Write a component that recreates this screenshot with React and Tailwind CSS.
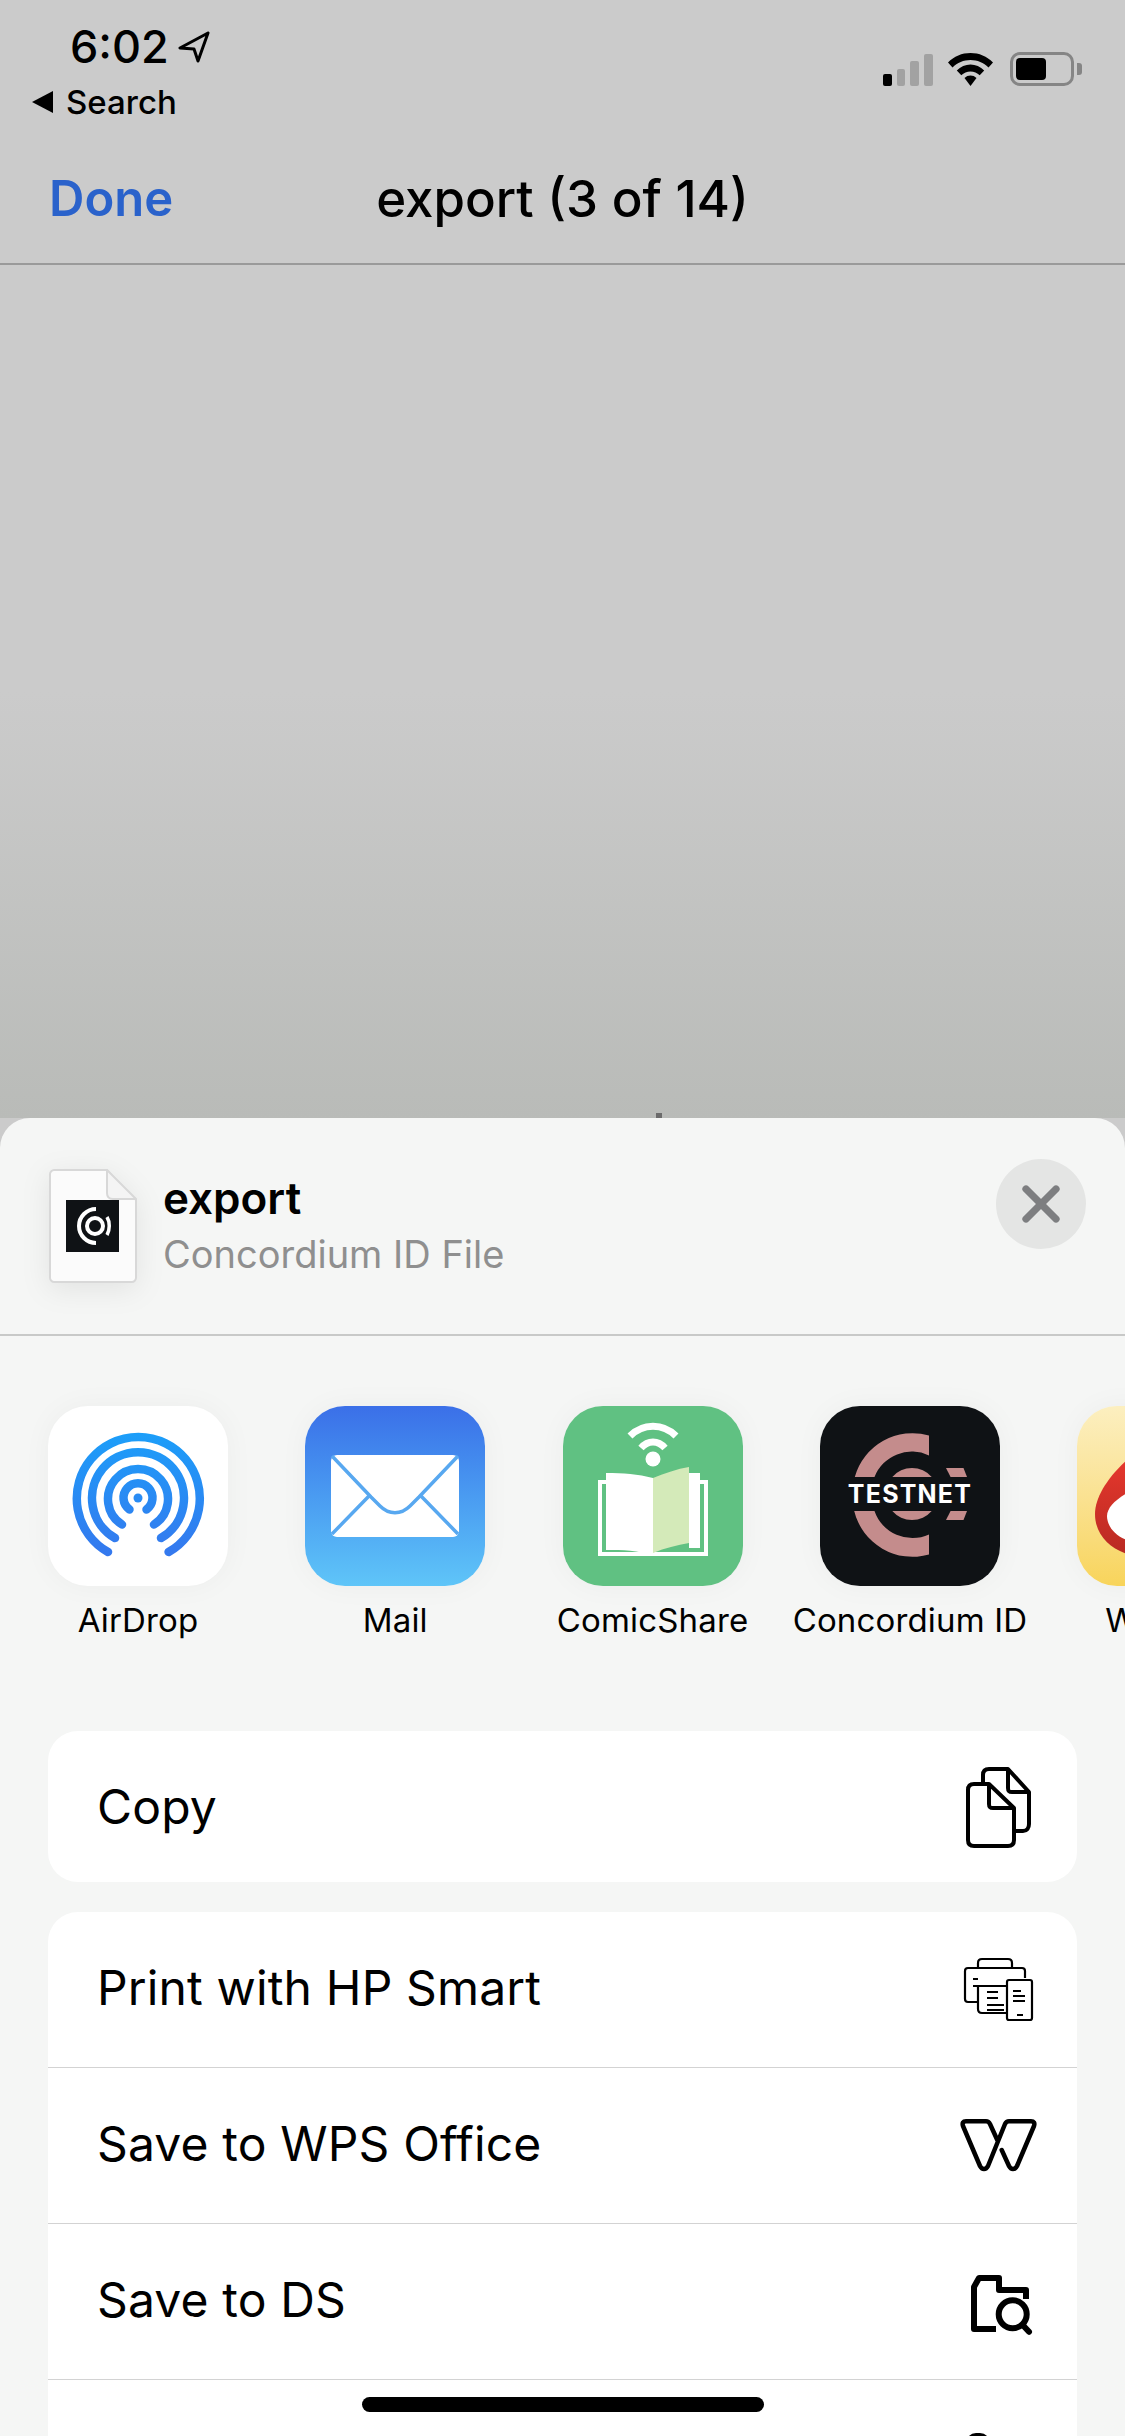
import { X } from "lucide-react"

function StatusIcons() {
  return (
    <div className="flex items-end gap-[15px] h-[34px]">
      {/* signal */}
      <div className="flex items-end gap-[5px]">
        <div className="w-[9px] h-[12px] bg-black rounded-[2px]" />
        <div className="w-[8px] h-[17px] bg-[#a2a2a2] rounded-[2px]" />
        <div className="w-[9px] h-[25px] bg-[#a2a2a2] rounded-[2px]" />
        <div className="w-[9px] h-[32px] bg-[#a2a2a2] rounded-[2px]" />
      </div>
      <svg width="45" height="33" viewBox="0 0 45 33">
        <path d="M22.5 0C14 0 6 3.300 0 9.500L4.500 14.500C9.300 9.700 15.700 7 22.500 7S35.700 9.700 40.500 14.500L45 9.500C39 3.300 31 0 22.500 0Z" />
        <path d="M22.500 11.500C17.500 11.500 12.500 13.500 8.800 17.500L13.300 22.300C15.800 19.800 19 18.500 22.500 18.500S29.200 19.800 31.700 22.300L36.200 17.500C32.500 13.500 27.500 11.500 22.500 11.500Z" />
        <path d="M22.500 22.500C20.300 22.500 18.200 23.300 16.500 25L22.500 33L28.500 25C26.800 23.300 24.700 22.500 22.500 22.500Z" />
      </svg>
      <div className="ml-[2px] flex items-center gap-[3px]">
        <div className="w-[64px] h-[34px] rounded-[10px] border-[3px] border-[#858585] pl-[3px] py-[3px]">
          <div className="w-[30px] h-[22px] bg-black rounded-[4px]" />
        </div>
        <div className="w-[5px] h-[12px] bg-[#858585] rounded-r-[3px]" />
      </div>
    </div>
  )
}

function AirDropIcon() {
  return (
    <svg width="180" height="180" viewBox="0 0 180 180" fill="none">
      <defs>
        <linearGradient id="airdropGrad" gradientUnits="userSpaceOnUse" x1="0" y1="28" x2="0" y2="150">
          <stop offset="0" stopColor="#1c9ef9" />
          <stop offset="1" stopColor="#3578ee" />
        </linearGradient>
      </defs>
      <g stroke="url(#airdropGrad)" strokeWidth="8.500" strokeLinecap="round">
        <path d="M60 146A61.500 61.500 0 1 1 120.600 146" />
        <path d="M67 132A46 46 0 1 1 113 132" />
        <path d="M74 118.500A30 30 0 1 1 106 118.500" />
        <path d="M81.500 103.500A14.500 14.500 0 1 1 98.500 103.500" />
      </g>
      <circle cx="90" cy="92" r="4.500" fill="#2a8cf4" />
    </svg>
  )
}

function MailIcon() {
  return (
    <svg width="180" height="180" viewBox="0 0 180 180" fill="none">
      <rect x="26" y="49" width="128" height="82" rx="6" fill="#fff" />
      <g stroke="#58a8f0" strokeWidth="3.500">
        <path d="M27 50L66 91L75 100C84 109 96 109 105 100L114 91L153 50" />
        <path d="M64 90L27 128M116 90L153 128" />
      </g>
    </svg>
  )
}

function ComicShareIcon() {
  return (
    <svg width="180" height="180" viewBox="0 0 180 180" fill="none">
      <g stroke="#fff" strokeWidth="7">
        <path d="M67 30C80 17 100 17 113 30" />
        <path d="M78 42C85 34 95 34 102 42" />
      </g>
      <circle cx="90" cy="53" r="7.500" fill="#fff" />
      <rect x="37" y="76" width="106" height="72" stroke="#fff" strokeWidth="4" />
      <rect x="126" y="67" width="11" height="75" fill="#fff" />
      <path d="M43 67C60 67 75 68 90 72V150C75 144 60 144 43 144Z" fill="#fff" />
      <path d="M90 72C102 67 114 63 126 61V137C114 139 102 142 90 147Z" fill="#d4eab9" />
    </svg>
  )
}

function ConcordiumIcon() {
  return (
    <svg width="180" height="180" viewBox="0 0 180 180">
      <g fill="#c48c8c">
        <path d="M109 29.500A60 60 0 0 0 34.800 71H54.500A40 40 0 0 1 109 49.500Z" />
        <path d="M109 148.500A60 60 0 0 1 34.200 105H54.500A40 40 0 0 0 109 128.500Z" />
        <path d="M72.300 71A26 26 0 0 1 111.700 71Z" />
        <path d="M72.300 105A26 26 0 0 0 111.700 105Z" />
        <path d="M126 62H143.500L147 71H130.600Z" />
        <path d="M130.600 105H147L143.500 114H126Z" />
      </g>
      <text x="90" y="97" textAnchor="middle" fill="#fff" fontFamily="Inter, sans-serif" fontWeight="700" fontSize="25" letterSpacing="1.200">TESTNET</text>
    </svg>
  )
}

function PartialIcon() {
  return (
    <svg width="180" height="180" viewBox="0 0 180 180">
      <defs>
        <linearGradient id="redGrad" x1="0" y1="0" x2="0" y2="1">
          <stop offset="0" stopColor="#e5372d" />
          <stop offset="1" stopColor="#b92a22" />
        </linearGradient>
      </defs>
      <path d="M50 54C30 72 18 92 18 108C18 128 32 142 50 148H100V54Z" fill="url(#redGrad)" />
      <path d="M50 87C38 94 30 102 30 110C30 120 38 130 50 134H100V87Z" fill="#fff" />
    </svg>
  )
}

function AppItem({ label, iconClass, children }) {
  return (
    <div className="w-[180px] shrink-0 flex flex-col items-center">
      <div className={`w-[180px] h-[180px] rounded-[40px] overflow-hidden shadow-[0_0_30px_rgba(0,0,0,0.04)] ${iconClass}`}>
        {children}
      </div>
      <span className="mt-[14px] text-[33px] leading-[40px] text-black whitespace-nowrap tracking-[0.15px]">{label}</span>
    </div>
  )
}

function CopyIcon() {
  return (
    <svg width="75" height="90" viewBox="0 0 75 90" fill="none" stroke="#000" strokeWidth="4" strokeLinejoin="round">
      <path d="M22 21V13C22 9 24 7 28 7H47L68 30V62C68 66 66 69 62 69H55" />
      <path d="M47 7V26C47 29 48 30 51 30H68" />
      <path d="M28 22H13C9 22 7 24 7 28V78C7 82 9 84 13 84H47C51 84 53 82 53 78V46L28 22Z" fill="#fff" />
      <path d="M28 22V42C28 45 29 46 32 46H53" />
    </svg>
  )
}

function PrintIcon() {
  return (
    <svg width="76" height="70" viewBox="0 0 76 70" fill="none" stroke="#000" strokeWidth="2.200" strokeLinejoin="round">
      <path d="M18 13V8C18 5 20 4 22 4H48C50 4 52 5 52 8V13" />
      <path d="M65 23V16C65 14 64 13 62 13H8C6 13 5 14 5 16V44C5 46 6 47 8 47H18" />
      <path d="M13 24H18M13 31H47" />
      <path d="M18 31V54C18 57 19 58 22 58H46" />
      <path d="M27 37H38M27 43H38M27 50H44M27 55H44" />
      <rect x="47" y="25" width="25" height="40" rx="2" fill="#fff" />
      <path d="M53 36H61M53 41H65M53 46H65M57 60H63" />
    </svg>
  )
}

function WpsIcon() {
  return (
    <svg width="87" height="63" viewBox="0 0 87 63" fill="none" stroke="#000" strokeWidth="4.500" strokeLinejoin="round" strokeLinecap="round">
      <path d="M42.300 26L35 10C34 8 33 7.300 31 7.300H11C8 7.300 7 9 8 12L25 52C27 56 31 56 33 52L50 10C51 8 52 7.300 54 7.300H76C79 7.300 80 9 79 12L62 52C60 56 56 56 54 52L46.700 36" />
    </svg>
  )
}

function FolderSearchIcon() {
  return (
    <svg width="75" height="72" viewBox="0 0 75 72" fill="none" stroke="#000" strokeWidth="6">
      <path d="M35 63H13V21L18 12H38V24H65V33" strokeLinejoin="round" />
      <circle cx="51.700" cy="48.300" r="14" />
      <path d="M61.700 59L68 65.700" strokeLinecap="round" />
    </svg>
  )
}

function ActionRow({ label, icon, divider }) {
  return (
    <div className={`h-[156px] flex items-center justify-between pl-[49px] pr-[33px] ${divider ? "border-b border-[#d3d3d3]" : ""}`}>
      <span className="text-[48px] text-black tracking-[0.15px] -mt-[3px]">{label}</span>
      <div className="w-[92px] flex justify-center">{icon}</div>
    </div>
  )
}

export default function App() {
  return (
    <div className="relative h-[2436px] w-[1125px] overflow-hidden flex flex-col bg-[#cbcbcb] font-[family-name:Inter,sans-serif]">
      {/* Status bar */}
      <div className="h-[132px] flex justify-between shrink-0">
        <div className="pl-[32px]">
          <div className="flex items-center pl-[38px] pt-[20px] h-[74px]">
            <span className="text-[45px] font-medium leading-[50px] text-black">6:02</span>
            <svg className="ml-[9px]" width="32" height="32" viewBox="0 0 32 32" fill="none" stroke="#000" strokeWidth="3" strokeLinejoin="round">
              <path d="M30 2L2 17L16 18L20 30Z" />
            </svg>
          </div>
          <div className="flex items-center mt-[8px]">
            <svg width="24" height="22" viewBox="0 0 24 22"><path d="M0 11L21 0V22Z" /></svg>
            <span className="ml-[10px] text-[33px] font-medium leading-[40px] text-black">Search</span>
          </div>
        </div>
        <div className="pt-[52px] pr-[43px]">
          <StatusIcons />
        </div>
      </div>

      {/* Nav bar */}
      <div className="relative h-[133px] shrink-0 flex items-center justify-center pt-[3px] border-b-2 border-[#9a9a9a]">
        <span className="absolute left-[49px] text-[49px] font-semibold text-[#2a62cb]">Done</span>
        <span className="text-[51px] font-medium text-black">export (3 of 14)</span>
      </div>

      {/* Blank preview */}
      <div className="flex-1 flex items-end pl-[656px] bg-gradient-to-b from-[#cbcbcb] from-50% to-[#b9bbb8]">
        <div className="w-[6px] h-[5px] bg-[#6b6b6b]" />
      </div>

      {/* Share sheet */}
      <div className="h-[1318px] shrink-0 bg-[#f5f6f5] rounded-t-[30px] overflow-hidden">
        <div className="h-[218px] flex items-start justify-between pl-[49px] pr-[39px] border-b-2 border-[#c8c9c8]">
          <div className="flex items-start pt-[51px]">
            <svg className="drop-shadow-[0_6px_14px_rgba(0,0,0,0.08)]" width="88" height="114" viewBox="0 0 88 114">
              <path d="M5 1H58L87 31V109C87 111 85 113 83 113H5C3 113 1 111 1 109V5C1 3 3 1 5 1Z" fill="#fbfbfb" stroke="#d8d8d8" strokeWidth="2" />
              <path d="M58 1V24C58 28 60 30 64 30H87Z" fill="#f4f4f4" stroke="#d8d8d8" strokeWidth="2" />
              <rect x="17" y="31" width="53" height="52" fill="#0f1215" />
              <g fill="none" stroke="#fff">
                <path d="M47 40A17 17 0 0 0 47 74" strokeWidth="4" />
                <circle cx="46" cy="57" r="8" strokeWidth="4" />
                <path d="M58 48C61 53 61 61 58 66" strokeWidth="3.500" />
              </g>
            </svg>
            <div className="ml-[26px]">
              <div className="text-[44px] font-semibold leading-[58px] text-black">export</div>
              <div className="text-[38px] leading-[54px] text-[#8f8f8f]">Concordium ID File</div>
            </div>
          </div>
          <div className="mt-[41px] w-[90px] h-[90px] rounded-full bg-[#e4e5e4] flex items-center justify-center">
            <X size={60} strokeWidth={2.900} color="#7d7e80" />
          </div>
        </div>

        {/* Share targets */}
        <div className="flex gap-[77.300px] pl-[48px] pt-[70px]">
          <AppItem label="AirDrop" iconClass="bg-white"><AirDropIcon /></AppItem>
          <AppItem label="Mail" iconClass="bg-gradient-to-b from-[#3b6fe8] to-[#5fc5f8]"><MailIcon /></AppItem>
          <AppItem label="ComicShare" iconClass="bg-[#60c182]"><ComicShareIcon /></AppItem>
          <AppItem label="Concordium ID" iconClass="bg-[#0f1215]"><ConcordiumIcon /></AppItem>
          <AppItem label="WeChat" iconClass="bg-gradient-to-b from-[#fcefc0] to-[#f8d45a]"><PartialIcon /></AppItem>
        </div>

        {/* Actions */}
        <div className="mx-[48px] mt-[91px] h-[151px] bg-white rounded-[30px] flex items-center justify-between pl-[49px] pr-[33px]">
          <span className="text-[48px] text-black tracking-[0.15px]">Copy</span>
          <div className="w-[92px] flex justify-center"><CopyIcon /></div>
        </div>
        <div className="mx-[48px] mt-[30px] bg-white rounded-[30px] overflow-hidden">
          <ActionRow label="Print with HP Smart" icon={<PrintIcon />} divider />
          <ActionRow label="Save to WPS Office" icon={<WpsIcon />} divider />
          <ActionRow label="Save to DS" icon={<FolderSearchIcon />} divider />
          <div className="h-[156px] flex justify-end pr-[87px] pt-[53px]">
            <div className="w-[24px] h-[20px] bg-black rounded-t-[10px]" />
          </div>
        </div>
      </div>

      {/* Home indicator */}
      <div className="absolute left-[362px] bottom-[24px] w-[402px] h-[15px] rounded-full bg-black" />
    </div>
  )
}
